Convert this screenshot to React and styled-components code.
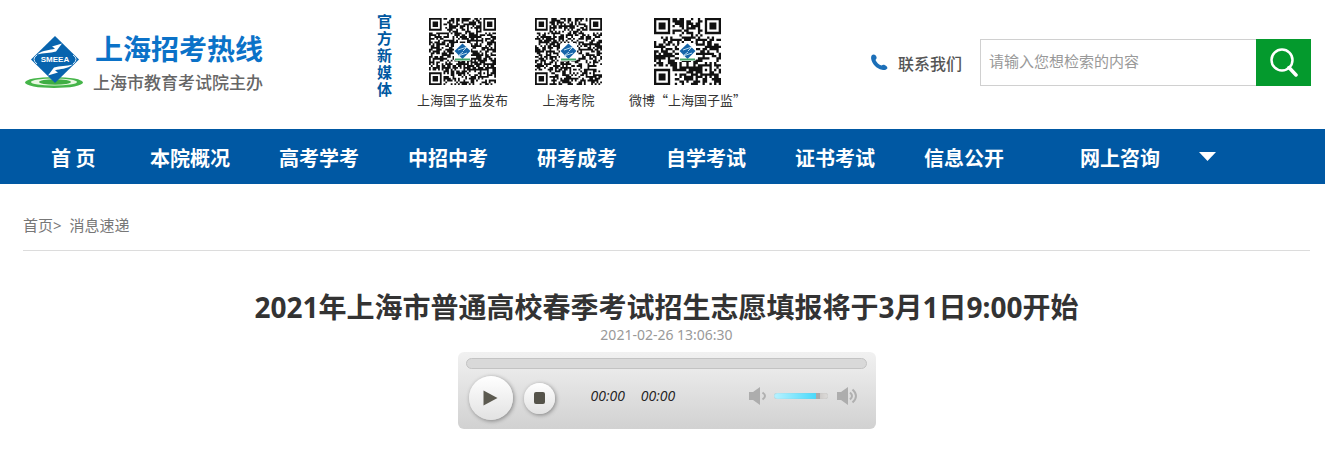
import React from 'react';
import styled, { createGlobalStyle } from 'styled-components';

const GlobalStyle = createGlobalStyle`
  * { box-sizing: border-box; }
  body {
    margin: 0;
    background: #fff;
    color: #333;
    font-family: 'Noto Sans', 'Noto Sans CJK SC', sans-serif;
  }
  a { color: inherit; text-decoration: none; }
  button { border: 0; padding: 0; font: inherit; cursor: pointer; }
`;

const Header = styled.header`
  display: flex;
  align-items: flex-start;
  min-height: 129px;
  padding: 0 14px 0 24px;
`;

const Logo = styled.a`
  display: flex;
  align-items: flex-start;
  gap: 9px;
  padding-top: 31px;
  white-space: nowrap;
`;

const LogoText = styled.span`
  display: flex;
  flex-direction: column;
  font-family: 'Noto Sans CJK SC', sans-serif;
`;

const LogoName = styled.strong`
  padding-left: 2px;
  font-size: 28px;
  line-height: 34px;
  color: #0b72c8;
`;

const LogoSub = styled.span`
  font-size: 17px;
  line-height: 34px;
  font-weight: 500;
  color: #666;
`;

const Media = styled.section`
  display: flex;
  margin-left: 114px;
`;

const MediaTitle = styled.h2`
  width: 16px;
  margin: 13px 24px 0 0;
  font-size: 15px;
  line-height: 17px;
  font-weight: 700;
  color: #0058a1;
`;

const QrList = styled.div`
  display: flex;
  gap: 27px;
`;

const QrItem = styled.figure`
  display: flex;
  flex-direction: column;
  align-items: center;
  margin: 0;
  padding-top: 18px;
`;

const QrLabel = styled.figcaption`
  margin-top: 5px;
  font: 13px/20px 'Noto Sans CJK SC', sans-serif;
  white-space: nowrap;
  color: #333;
`;

const Tools = styled.div`
  display: flex;
  align-items: center;
  margin: 39px 0 0 auto;
`;

const Contact = styled.a`
  display: flex;
  align-items: center;
  gap: 10px;
  margin-right: 18px;
  font-size: 16px;
  font-weight: 500;
  line-height: 24px;
  font-family: 'Noto Sans CJK SC', sans-serif;
  white-space: nowrap;
  color: #555;
`;

const SearchForm = styled.form`
  display: flex;
  height: 47px;
`;

const SearchInput = styled.input`
  width: 276px;
  padding: 0 8px 4px;
  border: 1px solid #d0d0d0;
  border-right: 0;
  border-radius: 0;
  outline: 0;
  font: 15px 'Noto Sans CJK SC', sans-serif;
  color: #333;
  &::placeholder { color: #999; opacity: 1; }
`;

const SearchButton = styled.button`
  display: grid;
  place-items: center;
  width: 55px;
  background: #049a2d;
`;

const Nav = styled.nav`
  display: flex;
  align-items: center;
  gap: 49px;
  min-height: 55px;
  padding: 0 51px;
  background: #0058a3;
`;

const NavLink = styled.a`
  min-width: 50px;
  padding-top: 2px;
  font: 700 20px/30px 'Noto Sans CJK SC', sans-serif;
  white-space: nowrap;
  color: #fff;
  margin-left: ${(p) => (p.$apart ? '27px' : '0')};
`;

const MoreButton = styled.button`
  display: grid;
  margin-left: -10px;
  background: none;
`;

const Main = styled.main`
  padding: 27px 15px 28px 23px;
`;

const Breadcrumb = styled.div`
  padding-bottom: 11px;
  border-bottom: 1px solid #dcdcdc;
  font-size: 15px;
  line-height: 28px;
  color: #777;
`;

const Title = styled.h1`
  margin: 36px 0 0;
  font-size: 28px;
  line-height: 40px;
  font-weight: 700;
  text-align: center;
  color: #333;
`;

const PubDate = styled.time`
  display: block;
  font-size: 14px;
  line-height: 16px;
  text-align: center;
  color: #999;
`;

const Player = styled.section`
  width: 418px;
  max-width: 100%;
  margin: 9px auto 0;
  padding: 6px 9px 9px 8px;
  border-radius: 6px;
  background: linear-gradient(#f1f1f1, #d1d1d1);
`;

const Seek = styled.input`
  appearance: none;
  display: block;
  width: 100%;
  height: 11px;
  margin: 0;
  border: 1px solid #c3c3c3;
  border-radius: 6px;
  background: #d9d9d9;
  &::-webkit-slider-thumb { appearance: none; width: 1px; height: 1px; }
`;

const Controls = styled.div`
  display: flex;
  align-items: center;
  padding: 7px 9px 0 3px;
`;

const RoundButton = styled.button`
  display: grid;
  place-items: center;
  width: ${(p) => p.$size}px;
  height: ${(p) => p.$size}px;
  border-radius: 50%;
  background: linear-gradient(#fff, #e2e2e2);
  box-shadow: 1px 1px 4px rgba(0, 0, 0, 0.4);
  & + & { margin-left: 11px; }
`;

const Times = styled.div`
  display: flex;
  gap: 16px;
  margin-left: 36px;
  padding-bottom: 4px;
  font: italic 14px/20px 'Open Sans', 'Noto Sans', sans-serif;
  color: #222;
`;

const VolumeGroup = styled.div`
  display: flex;
  align-items: center;
  gap: 7px;
  margin-left: auto;
  padding-bottom: 4px;
`;

const IconButton = styled.button`
  display: grid;
  background: none;
`;

const Volume = styled.input`
  appearance: none;
  width: 54px;
  height: 6px;
  margin: 0 2px 0 0;
  border-radius: 3px;
  background: linear-gradient(90deg, #b8f2ff, #45d9fb 80%, #c9c6c4 80%, #dedcda);
  box-shadow: inset 0 0 1px #aaa;
  &::-webkit-slider-thumb { appearance: none; width: 4px; height: 6px; background: #aaa; }
`;

function Emblem({ width, height }) {
  return (
    <svg width={width} height={height} viewBox="0 0 60 58" aria-hidden="true">
      <ellipse cx="30" cy="51.500" rx="29" ry="5.500" fill="#45b549" />
      <ellipse cx="30" cy="51" rx="23" ry="3.600" fill="#e9f8e2" />
      <ellipse cx="31" cy="51" rx="16" ry="2.800" fill="#3fae43" />
      <path d="M31 5 55 28.500 31 52 7 28.500Z" fill="#0864ae" />
      <path d="M13 23.500c6-5 13-4 18-6l-3-2 10-3-6 8c-6 2-12 1-19 3Z" fill="#fff" />
      <path d="M49 33.500c-6 5-13 4-18 6l3 2-10 3 6-8c6-2 12-1 19-3Z" fill="#fff" />
      <path d="M13 24q-6 4 0 9M49 24q6 4 0 9" fill="none" stroke="#d8ecfa" />
      <text x="31" y="31" textAnchor="middle" fontFamily="Liberation Sans" fontWeight="700" fontSize="8" fill="#fff">SMEEA</text>
    </svg>
  );
}

function buildModules(n, seed) {
  let state = seed;
  const next = () => {
    state = (state * 1664525 + 1013904223) % 4294967296;
    return state / 4294967296;
  };
  let d = '';
  for (let y = 0; y < n; y += 1) {
    for (let x = 0; x < n; x += 1) {
      const dark = next() > 0.43;
      const inFinder = (x < 8 && y < 8) || (x > n - 9 && y < 8) || (x < 8 && y > n - 9);
      const ring = Math.max(Math.abs(x - (n - 7)), Math.abs(y - (n - 7)));
      const on = ring <= 2 ? ring !== 1 : dark;
      if (!inFinder && on) d += `M${x} ${y}h1v1h-1z`;
    }
  }
  [[0, 0], [n - 7, 0], [0, n - 7]].forEach(([x, y]) => {
    d += `M${x} ${y}h7v7h-7zM${x + 1} ${y + 1}v5h5v-5zM${x + 2} ${y + 2}h3v3h-3z`;
  });
  return d;
}

function QrCode({ size, seed, label }) {
  return (
    <svg width="67" height="67" viewBox="0 0 67 67" role="img" aria-label={label}>
      <path d={buildModules(size, seed)} transform={`scale(${67 / size})`} fill="#111" />
      <rect x="25" y="25" width="17" height="18" rx="2" fill="#fff" />
      <path d="m33.500 25.500 8 7.500-8 8-8-8Z" fill="#1565a9" />
      <path d="m29 32 9-3-4 4M38 35l-9 3 5-4" stroke="#b9dbef" fill="none" />
      <path d="M26 41.500h15" stroke="#43a66b" strokeWidth="2" />
    </svg>
  );
}

function Speaker({ loud }) {
  return (
    <svg width={loud ? 21 : 18} height="18" viewBox={loud ? '0 0 21 18' : '0 0 18 18'} fill="none" stroke="#b0b0b0" strokeWidth="2" aria-hidden="true">
      <path d="M0 5h4l7-5v18l-7-5H0Z" fill="#adadad" stroke="none" />
      {loud ? <path d="M13 5.500q4 3.500 0 7M15.500 2.500q7 6.500 0 13" /> : <path d="M13.500 5.500q5 3.500 0 7" />}
    </svg>
  );
}

const codes = [
  { label: '上海国子监发布', size: 37, seed: 71 },
  { label: '上海考院', size: 37, seed: 1234 },
  { label: '微博“上海国子监”', size: 29, seed: 907 },
];

const links = ['首 页', '本院概况', '高考学考', '中招中考', '研考成考', '自学考试', '证书考试', '信息公开', '网上咨询'];

export default function App() {
  return (
    <>
      <GlobalStyle />
      <Header>
        <Logo href="#">
          <Emblem width="60" height="58" />
          <LogoText>
            <LogoName>上海招考热线</LogoName>
            <LogoSub>上海市教育考试院主办</LogoSub>
          </LogoText>
        </Logo>
        <Media>
          <MediaTitle>官方新媒体</MediaTitle>
          <QrList>
            {codes.map((code) => (
              <QrItem key={code.label}>
                <QrCode {...code} />
                <QrLabel>{code.label}</QrLabel>
              </QrItem>
            ))}
          </QrList>
        </Media>
        <Tools>
          <Contact href="#">
            <svg width="17" height="17" viewBox="0 0 17 17" aria-hidden="true">
              <path d="M1 1C3-.5 5 1 5.500 3c.4 1.500-.5 2-1 3C5.500 8.500 8 11 10.500 11.500c1-.6 2-1 3.500-.3 2 1 3 2.600 2 3.600-1 1.200-3 1.600-5 1C5.500 14.800 1 9.500.2 5 0 3.500 0 2 1 1Z" fill="#1c6fb8" />
            </svg>
            联系我们
          </Contact>
          <SearchForm onSubmit={(e) => e.preventDefault()}>
            <SearchInput type="text" aria-label="检索" placeholder="请输入您想检索的内容" />
            <SearchButton type="submit" aria-label="检索">
              <svg width="28" height="29" viewBox="0 0 28 29" fill="none" stroke="#fff" aria-hidden="true">
                <circle cx="12" cy="12" r="10.500" strokeWidth="2.500" />
                <path d="m19 19.500 7 7.500" strokeWidth="3.500" strokeLinecap="round" />
              </svg>
            </SearchButton>
          </SearchForm>
        </Tools>
      </Header>
      <Nav>
        {links.map((text, i) => (
          <NavLink key={text} href="#" $apart={i === links.length - 1}>{text}</NavLink>
        ))}
        <MoreButton type="button" aria-label="更多">
          <svg width="17" height="9" viewBox="0 0 17 9" aria-hidden="true">
            <path d="M0 0h17L8.500 9Z" fill="#fff" />
          </svg>
        </MoreButton>
      </Nav>
      <Main>
        <Breadcrumb>
          <a href="#">首页</a>&gt;&nbsp; <a href="#">消息速递</a>
        </Breadcrumb>
        <Title>2021年上海市普通高校春季考试招生志愿填报将于3月1日9:00开始</Title>
        <PubDate>2021-02-26 13:06:30</PubDate>
        <Player aria-label="音频">
          <Seek type="range" aria-label="进度" defaultValue="0" />
          <Controls>
            <RoundButton type="button" $size={44} aria-label="播放">
              <svg width="15" height="16" viewBox="0 0 15 16" aria-hidden="true">
                <path d="M.5.5 14.500 8 .5 15.500Z" fill="#5c5a50" />
              </svg>
            </RoundButton>
            <RoundButton type="button" $size={31} aria-label="停止">
              <svg width="11" height="12" viewBox="0 0 11 12" aria-hidden="true">
                <rect width="11" height="12" rx="2" fill="#55534a" />
              </svg>
            </RoundButton>
            <Times>
              <span>00:00</span>
              <span>00:00</span>
            </Times>
            <VolumeGroup>
              <IconButton type="button" aria-label="静音"><Speaker /></IconButton>
              <Volume type="range" aria-label="音量" defaultValue="85" />
              <IconButton type="button" aria-label="最大音量"><Speaker loud /></IconButton>
            </VolumeGroup>
          </Controls>
        </Player>
      </Main>
    </>
  );
}
